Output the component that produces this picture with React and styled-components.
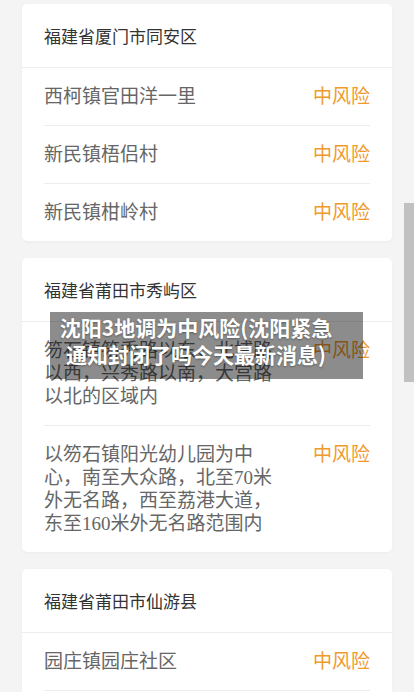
import React from 'react';
import styled, { createGlobalStyle } from 'styled-components';

const GlobalStyle = createGlobalStyle`
html, body {
    margin: 0;
    padding: 0;
    height: 100%;
    overflow: hidden;
    background: #f4f4f4;
}
body {
    font-family: "Liberation Serif", "Noto Sans CJK SC", serif;
}
`;

const Page = styled.div`
position: relative;
width: 414px;
height: 692px;
overflow: hidden;
background: #f4f4f4;
`;

const List = styled.div`
display: flex;
flex-direction: column;
gap: 17px;
padding: 4px 22px 0 22px;
`;

const Card = styled.section`
background: #fff;
border-radius: 5px;
box-shadow: 0 1px 3px rgba(0, 0, 0, 0.04);
`;

const CardHeader = styled.div`
padding: 22px 22px 18px;
font-size: 17px;
line-height: 23px;
color: #333;
border-bottom: 1px solid #ededed;
`;

const Rows = styled.div`
padding: 0 22px;
`;

const Row = styled.div`
display: flex;
justify-content: space-between;
align-items: flex-start;
padding: 17px 0;
& + & {
    border-top: 1px solid #ededed;
}
`;

const Place = styled.div`
max-width: 236px;
font-size: 19px;
line-height: 23px;
color: #666;
`;

const Risk = styled.span`
font-size: 19px;
line-height: 23px;
color: ${p => p.color || '#f09a2c'};
white-space: nowrap;
`;

const Banner = styled.div`
position: absolute;
top: 312px;
left: 50px;
width: 313px;
height: 67px;
box-sizing: border-box;
padding: 2px 27px 0 6px;
background: rgba(0, 0, 0, 0.45);
color: #fff;
font-family: "Noto Sans CJK SC", sans-serif;
font-weight: 700;
font-size: 21px;
line-height: 27px;
text-align: center;
text-shadow: 0 1px 2px rgba(0, 0, 0, 0.35);
`;

const ScrollThumb = styled.div`
position: absolute;
top: 203px;
right: 0;
width: 10px;
height: 179px;
background: #c1c1c1;
`;

const areas = [
    {
        name: '福建省厦门市同安区',
        places: ['西柯镇官田洋一里', '新民镇梧侣村', '新民镇柑岭村'],
    },
    {
        name: '福建省莆田市秀屿区',
        places: [
            '笏石镇笏秀路以东，北埔路以西，兴秀路以南，大宫路以北的区域内',
            '以笏石镇阳光幼儿园为中心，南至大众路，北至70米外无名路，西至荔港大道，东至160米外无名路范围内',
        ],
    },
    {
        name: '福建省莆田市仙游县',
        places: ['园庄镇园庄社区', '度尾镇潭边村'],
    },
];

const App = () => {
    return (
        <Page>
            <GlobalStyle />
            <List>
                {areas.map(area => (
                    <Card key={area.name}>
                        <CardHeader>{area.name}</CardHeader>
                        <Rows>
                            {area.places.map(place => (
                                <Row key={place}>
                                    <Place>{place}</Place>
                                    <Risk>中风险</Risk>
                                </Row>
                            ))}
                        </Rows>
                    </Card>
                ))}
            </List>
            {/* title overlay */}
            <Banner>沈阳3地调为中风险(沈阳紧急通知封闭了吗今天最新消息)</Banner>
            <ScrollThumb />
        </Page>
    );
};

export default App;
